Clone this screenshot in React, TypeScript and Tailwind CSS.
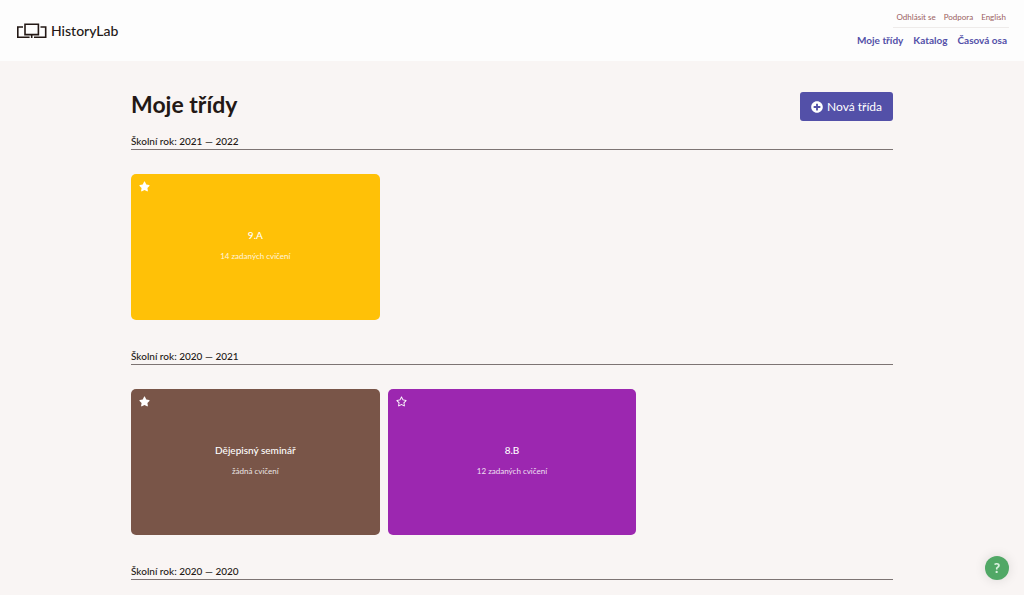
import { FaPlusCircle, FaRegStar, FaStar } from 'react-icons/fa';

type Classroom = {
  id: number;
  name: string;
  exercises: string;
  favorite: boolean;
  color: string;
};

type SchoolYear = {
  label: string;
  classrooms: Classroom[];
};

const schoolYears: SchoolYear[] = [
  {
    label: '2021 — 2022',
    classrooms: [
      { id: 1, name: '9.A', exercises: '14 zadaných cvičení', favorite: true, color: 'bg-[#ffc107]' },
    ],
  },
  {
    label: '2020 — 2021',
    classrooms: [
      { id: 2, name: 'Dějepisný seminář', exercises: 'žádná cvičení', favorite: true, color: 'bg-[#795548]' },
      { id: 3, name: '8.B', exercises: '12 zadaných cvičení', favorite: false, color: 'bg-[#9c27b0]' },
    ],
  },
  { label: '2020 — 2020', classrooms: [] },
];

function Logo() {
  return (
    <a href="#" className="flex items-center gap-1 text-[#231815]">
      <svg className="h-4 w-[31px]" viewBox="0 0 31 16" fill="none" stroke="currentColor" strokeWidth="1.6">
        <path d="M7 4H1.8v10.2h11.8" />
        <path d="M24.5 4h5.2v10.2H18" />
        <path d="M9 1.2h13.4v10.4H9z" />
        <path d="M15.7 11.6V15" />
      </svg>
      <span className="text-sm leading-5 font-medium">HistoryLab</span>
    </a>
  );
}

function Header() {
  return (
    <header className="flex h-[61px] items-center justify-between bg-[#fdfdfd] pr-[15px] pl-4">
      <Logo />
      <div className="flex flex-col items-end pb-0.5">
        <nav className="flex gap-2 border-b border-[#eeebea] pr-[3px] pl-1 pb-1 text-[8px] leading-3 text-[#9b5f5f]">
          <a href="#">Odhlásit se</a>
          <a href="#">Podpora</a>
          <a href="#">English</a>
        </nav>
        <nav className="flex gap-[10px] pt-1 pr-0.5 text-[10px] leading-4 font-bold text-[#5350a8]">
          <a href="#">Moje třídy</a>
          <a href="#">Katalog</a>
          <a href="#">Časová osa</a>
        </nav>
      </div>
    </header>
  );
}

function ClassroomCard({ classroom }: { classroom: Classroom }) {
  return (
    <article
      className={`relative flex h-[146px] flex-col items-center justify-center gap-[9px] rounded-[5px] pb-1 text-white ${classroom.color}`}
    >
      <button type="button" aria-label="Oblíbená třída" className="absolute top-[7px] left-2 cursor-pointer">
        {classroom.favorite ? <FaStar size={11} /> : <FaRegStar size={11} />}
      </button>
      <h3 className="text-[10px] leading-3 font-medium">{classroom.name}</h3>
      <p className="text-[8px] leading-3 opacity-85">{classroom.exercises}</p>
    </article>
  );
}

export default function App() {
  return (
    <div className="h-screen overflow-hidden bg-[#f9f5f4] font-['Lato',sans-serif] text-[#231815]">
      <Header />

      <main className="mx-auto w-full max-w-[762px] pt-[31px]">
        <div className="flex items-start justify-between pb-[13px]">
          <h1 className="text-[23px] leading-6 font-bold">Moje třídy</h1>
          <button
            type="button"
            className="flex h-[29px] cursor-pointer items-center gap-1 rounded-[3px] bg-[#5350a8] px-[11px] text-xs text-white"
          >
            <FaPlusCircle size={12} />
            Nová třída
          </button>
        </div>

        {schoolYears.map(year => (
          <section key={year.label} className="pb-[29px]">
            <h2 className="border-b border-[#7d7473] text-[10px] leading-[15px] font-medium">
              Školní rok: {year.label}
            </h2>
            <div className="grid grid-cols-3 gap-2 pt-6">
              {year.classrooms.map(classroom => (
                <ClassroomCard key={classroom.id} classroom={classroom} />
              ))}
            </div>
          </section>
        ))}
      </main>

      <button
        type="button"
        aria-label="Nápověda"
        className="fixed right-[15px] bottom-[15px] size-6 cursor-pointer rounded-full bg-[#51a866] text-sm font-black text-[#d9f0de] shadow-[0_0_12px_rgba(0,0,0,0.12)]"
      >
        ?
      </button>
    </div>
  );
}
